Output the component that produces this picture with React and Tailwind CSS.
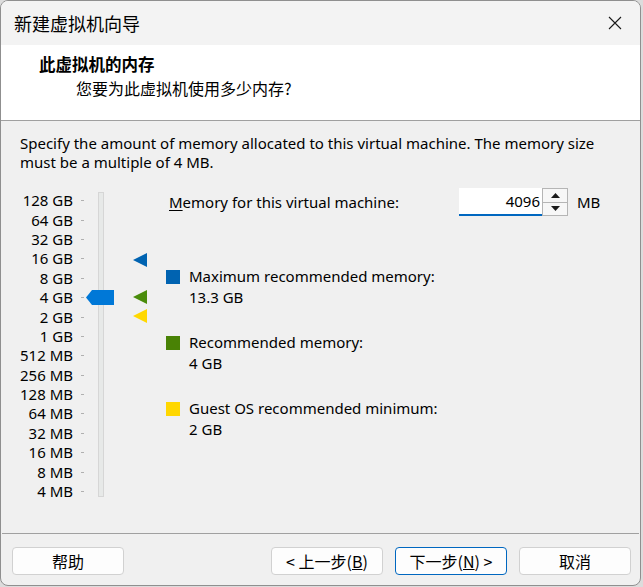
import React from "react";

const cjk = { fontFamily: '"Noto Sans CJK SC", "Noto Sans", sans-serif' };
const ui = { fontFamily: '"Noto Sans", "Noto Sans CJK SC", sans-serif' };

const labels = [
  "128 GB", "64 GB", "32 GB", "16 GB", "8 GB", "4 GB", "2 GB", "1 GB",
  "512 MB", "256 MB", "128 MB", "64 MB", "32 MB", "16 MB", "8 MB", "4 MB",
];

function Marker({ color, top }) {
  return (
    <svg className="absolute left-[132px]" style={{ top }} width="14" height="14" viewBox="0 0 14 14">
      <polygon points="0,7 14,0 14,14" fill={color} />
    </svg>
  );
}

function Btn({ children, primary }) {
  return (
    <div
      className={
        "w-[112px] h-[28px] rounded-[4px] border flex items-center justify-center text-[16px] text-black bg-[#fdfdfd] " +
        (primary ? "border-[#0067c0]" : "border-[#d1d1d1]")
      }
      style={cjk}
    >
      {children}
    </div>
  );
}

export default function App() {
  return (
    <div className="w-[643px] h-[587px] bg-[#dcdcdc] overflow-hidden">
      <div className="w-[641px] h-[586px] rounded-[8px] border border-[#8f8f8f] bg-[#f0f0f0] flex flex-col overflow-hidden">
        {/* title bar */}
        <div className="h-[44px] bg-[#f3f3f3] flex items-center justify-between pl-[13px] pr-[18px] shrink-0">
          <span className="text-[18px] text-black" style={cjk}>新建虚拟机向导</span>
          <svg width="14" height="14" viewBox="0 0 14 14">
            <path d="M1 1 L13 13 M13 1 L1 13" stroke="#1a1a1a" strokeWidth="1.1" />
          </svg>
        </div>
        {/* header */}
        <div className="h-[75px] bg-white shrink-0 pl-[38px] pt-[7px]" style={cjk}>
          <div className="text-[16.5px] font-bold leading-[24px] text-black">此虚拟机的内存</div>
          <div className="text-[16px] leading-[24px] pl-[37px] text-black">您要为此虚拟机使用多少内存?</div>
        </div>
        <div className="h-px bg-[#a0a0a0] shrink-0" />
        {/* body */}
        <div className="flex-1 flex flex-col" style={ui}>
          <div className="px-[19px] pt-[13px] text-[15px] leading-[19px] text-black">
            Specify the amount of memory allocated to this virtual machine. The memory size
            <br />
            must be a multiple of 4 MB.
          </div>
          <div className="flex mt-[19px]">
            {/* slider */}
            <div className="relative w-[160px] h-[320px] shrink-0">
              <div className="flex flex-col">
                {labels.map((l) => (
                  <div key={l} className="h-[19.4px] flex items-center">
                    <span className="w-[72px] text-right text-[15px] text-black leading-none">{l}</span>
                    <span className="ml-[8px] w-[3px] h-px bg-[#b0b0b0]" />
                  </div>
                ))}
              </div>
              <div className="absolute left-[97px] top-[1px] w-[6px] h-[305px] bg-[#e7e9e8] border border-[#d6d6d6]" />
              <svg className="absolute left-[85px] top-[99px]" width="28" height="15" viewBox="0 0 28 15">
                <polygon points="0,7.5 6,0 28,0 28,15 6,15" fill="#0078d7" />
              </svg>
              <Marker color="#0063b1" top={62} />
              <Marker color="#4a8c0b" top={99} />
              <Marker color="#ffd800" top={118} />
            </div>
            {/* right panel */}
            <div className="flex flex-col pl-[5px]">
              <div className="flex items-center h-[28px] -mt-[3px]">
                <span className="text-[15px] text-black w-[290px] ml-[3px]">
                  <span className="underline underline-offset-2">M</span>emory for this virtual machine:
                </span>
                <div className="w-[83px] h-[28px] bg-white border-b-2 border-[#0067c0] flex items-center justify-end pr-[2px] text-[15px] text-black">
                  4096
                </div>
                <div className="w-[26px] h-[28px] flex flex-col border border-[#b5b5b5] bg-[#f7f7f7]">
                  <div className="flex-1 flex items-center justify-center border-b border-[#b5b5b5]">
                    <svg width="9" height="5" viewBox="0 0 9 5"><polygon points="0,5 4.5,0 9,5" fill="#1a1a1a" /></svg>
                  </div>
                  <div className="flex-1 flex items-center justify-center">
                    <svg width="9" height="5" viewBox="0 0 9 5"><polygon points="0,0 9,0 4.5,5" fill="#1a1a1a" /></svg>
                  </div>
                </div>
                <span className="ml-[9px] text-[15px] text-black">MB</span>
              </div>
              <div className="flex flex-col gap-[24px] mt-[50px] text-[15px] leading-[21px] text-black">
                <div className="flex gap-[9px]">
                  <span className="w-[14px] h-[14px] bg-[#0063b1] mt-[4px]" />
                  <div>
                    <div>Maximum recommended memory:</div>
                    <div>13.3 GB</div>
                  </div>
                </div>
                <div className="flex gap-[9px]">
                  <span className="w-[14px] h-[14px] bg-[#498205] mt-[4px]" />
                  <div>
                    <div>Recommended memory:</div>
                    <div>4 GB</div>
                  </div>
                </div>
                <div className="flex gap-[9px]">
                  <span className="w-[14px] h-[14px] bg-[#ffd700] mt-[4px]" />
                  <div>
                    <div>Guest OS recommended minimum:</div>
                    <div>2 GB</div>
                  </div>
                </div>
              </div>
            </div>
          </div>
          <div className="flex-1" />
          <div className="h-px bg-[#a0a0a0] mx-[1px]" />
          <div className="h-[51px] flex items-center pl-[11px] pr-[9px] pt-[2px]">
            <Btn>帮助</Btn>
            <div className="flex-1" />
            <div className="flex gap-[12px]">
              <Btn>&lt; 上一步(<span className="underline">B</span>)</Btn>
              <Btn primary>下一步(<span className="underline">N</span>) &gt;</Btn>
              <Btn>取消</Btn>
            </div>
          </div>
        </div>
      </div>
    </div>
  );
}
